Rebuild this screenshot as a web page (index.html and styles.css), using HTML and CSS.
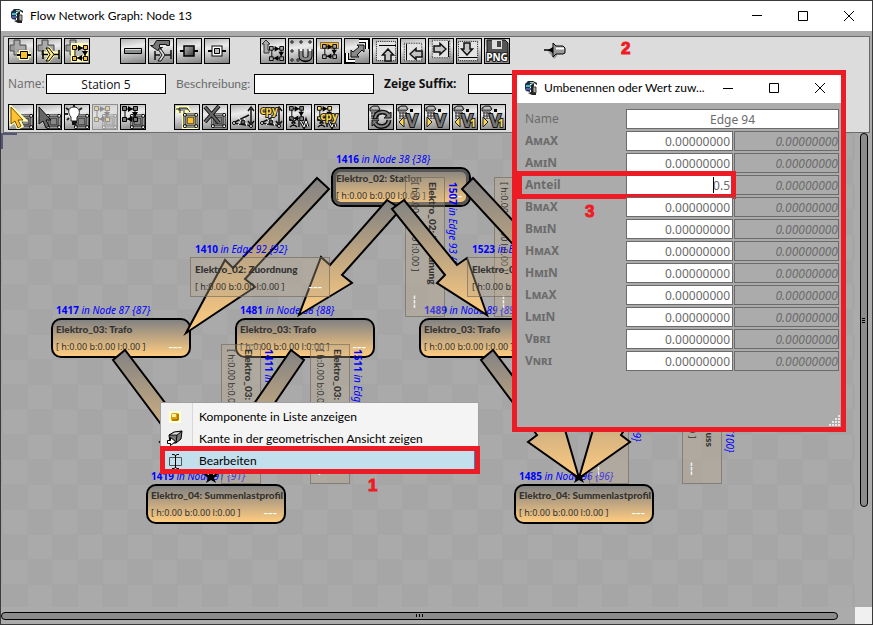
FILE: index.html
```html
<!DOCTYPE html>
<html lang="de">
<head>
<meta charset="utf-8">
<title>Flow Network Graph: Node 13</title>
<link rel="stylesheet" href="styles.css">
</head>
<body>
<svg class="sprite" aria-hidden="true">
  <defs>
    <linearGradient id="steel" x1="0" y1="0" x2="0" y2="1"><stop offset="0" stop-color="#828282"/><stop offset="1" stop-color="#ffcc80"/></linearGradient>
    <linearGradient id="metal" x1="0" y1="0" x2="1" y2="1"><stop offset="0" stop-color="#bbb"/><stop offset="1" stop-color="#333"/></linearGradient>
    <symbol id="logo" viewBox="0 0 15 16">
      <path d="M4 1h5l4 2v2l-3-2-4 1-3 2-2-2z" fill="#20242c"/><path d="M1 4l5-2v10l-4-1-1-2z" fill="#1c3550"/><path d="M2 5h5v2H2z" fill="#4bb5c8"/><path d="M2 8h5v2H2z" fill="#5a5aa0"/><path d="M7 5l3-2v3L9 8v4l3 1v2H8l-4-2 3-1z" fill="#222"/><path d="M9 7h3v6l-3-1z" fill="#aaa" stroke="#222" stroke-width=".8"/><path d="M6 2h4v1H6z" fill="#8cb"/>
    </symbol>
    <symbol id="plus" viewBox="0 0 24 24"><path d="M5 1h6v5h6v6h-6v4H5v-4H1V6h4z" fill="#999" stroke="#4c4c4c"/><path d="M6 2h4v5h6v3H8v5H6z" fill="#b5b5b5" opacity=".6"/></symbol>
    <symbol id="squares" viewBox="0 0 16 16">
      <path d="M3 3h10v10H3z" fill="none" stroke="#000"/><path d="M6 0l5 3-5 3zM10 6h6l-3 5zM10 10l-5 3 5 3z" fill="#000"/>
      <g stroke="#000"><path d="M.5.5h4v4h-4zM11.500.5h4v4h-4zM.5 11.500h4v4h-4zM11.500 11.500h4v4h-4z"/></g>
    </symbol>
    <symbol id="frame" viewBox="0 0 16 16">
      <path d="M2 2h12v12H2z" fill="none" stroke="#000" stroke-width="3"/><path d="M2 2h12v12H2z" fill="none" stroke="#fff"/>
      <path d="M4.500 4.500h7v7h-7z" stroke="#333"/>
      <g fill="#fff" stroke="#000"><circle cx="2" cy="2" r="1.600"/><circle cx="14" cy="2" r="1.600"/><circle cx="2" cy="14" r="1.600"/><circle cx="14" cy="14" r="1.600"/></g>
    </symbol>
    <symbol id="angle" viewBox="0 0 24 24">
      <path d="M2 18L18 10M2 18l19 3M20 4v14M17 6l3-4 3 4M17 16l3 4 3-4" fill="none" stroke="#111" stroke-width="1.500"/><path d="M7 12l3 4-3 4M13 13l3 8" fill="none" stroke="#fff"/><circle cx="3" cy="18" r="1.500" fill="#fff" stroke="#000"/><circle cx="12" cy="17" r="2" fill="#666" stroke="#000"/><circle cx="20" cy="21" r="1.500" fill="#fff" stroke="#000"/>
    </symbol>
    <symbol id="calc" viewBox="0 0 12 14"><path d="M1 3l3-2h5l2 3-2 2H1z" fill="#888" stroke="#222"/><path d="M3 3h6" stroke="#eee"/><path d="M2 7h8v7H2z" fill="#ddd"/><path d="M2 8h8M2 11h8M2 14h8M3 7v7M6 7v7M9 7v7" stroke="#333"/></symbol>
    <symbol id="page" viewBox="0 0 24 24"><path d="M1.500 1.500h21v21h-21z" fill="#e3e3e3" stroke="#000" stroke-dasharray="1 1"/></symbol>
    <symbol id="bold-arrow" viewBox="0 0 14 14"><path d="M7 1l5.500 6H10v6H4V7H1.500z" fill="#c4c4c4" stroke="#111" stroke-width="1.500"/></symbol>
    <symbol id="links" viewBox="0 0 24 24"><path d="M3 14l5 4-5 4M10 14l-5 4 5 4M12 15v7" fill="none" stroke="#111" stroke-width="1.500"/><path d="M14 17l3 5 2-6 2 6" stroke="#111" fill="none" stroke-width="3"/><path d="M14 17l3 5 2-6 2 6" stroke="#fff" fill="none"/></symbol>
  </defs>
</svg>

<div class="window">
  <header class="titlebar">
    <svg class="logo"><use href="#logo"/></svg>
    <h1 class="title">Flow Network Graph: Node 13</h1>
    <div class="controls">
      <button type="button" aria-label="Minimieren"><svg viewBox="0 0 12 12"><path d="M1 5.500h10"/></svg></button>
      <button type="button" aria-label="Maximieren"><svg viewBox="0 0 12 12"><path d="M1.500 1.500h9v9h-9z"/></svg></button>
      <button type="button" aria-label="Schließen"><svg viewBox="0 0 12 12"><path d="M1 1l10 10M11 1L1 11"/></svg></button>
    </div>
  </header>

  <section class="toolbar">
    <div class="tools tools-top">
      <div class="group">
        <button class="tool" type="button" aria-label="Knoten hinzufügen"><svg viewBox="0 0 24 24"><use href="#plus" width="24" height="24"/><path d="M8 16h14" stroke="#ffffb4" stroke-width="5"/><path d="M10 11h10v10H10z" fill="#ffffb4"/><path d="M8 16h14" stroke="#000" stroke-width="2"/><path d="M11.500 12.500h7v7h-7z" fill="#ffbe2e" stroke="#000"/></svg></button>
        <button class="tool" type="button" aria-label="Kante hinzufügen"><svg viewBox="0 0 24 24"><use href="#plus" width="24" height="24"/><path d="M6 15h17M10 9l6 6-6 7" fill="none" stroke="#ffffb4" stroke-width="5"/><path d="M6 11v9M22 11v9M6 15.500h5M16 15.500h6" stroke="#000" stroke-width="1.500"/><path d="M9 9h3l5 6.500-5 6.500H9l4-6.500z" fill="#ffe68a" stroke="#000"/></svg></button>
        <button class="tool" type="button" aria-label="Netz hinzufügen"><svg viewBox="0 0 24 24"><use href="#plus" width="24" height="24"/><path d="M6 4h17v19H6z" fill="#ffffb4"/><path d="M11 10h7v7h-7z" fill="#bbb"/><use href="#squares" x="7" y="6" width="16" height="16" fill="#ffbe2e"/></svg></button>
      </div>
      <div class="group">
        <button class="tool" type="button" aria-label="Balken"><svg viewBox="0 0 24 24"><path d="M3.500 9.500h17v5h-17z" fill="#8b8f8b" stroke="#000"/><path d="M4 10.500h16" stroke="#ddd"/></svg></button>
        <button class="tool" type="button" aria-label="Kante umleiten"><svg viewBox="0 0 24 24"><path d="M7.500 1.500h13v5h-3v-1h-7v3h3l-5 3-7-5h3z" fill="#777" stroke="#111"/><path d="M6 12v9M22 11v9M6 16h5M16 16h6" stroke="#111" stroke-width="1.500"/><path d="M9 10h3l4 6-4 6H9l4-6z" fill="#ddd" stroke="#111"/></svg></button>
        <button class="tool" type="button" aria-label="Knoten"><svg viewBox="0 0 24 24"><path d="M3 12h18" stroke="#000" stroke-width="2"/><path d="M7 7h10v10H7z" fill="url(#metal)" stroke="#000" stroke-width="1.500"/></svg></button>
        <button class="tool" type="button" aria-label="Innerer Knoten"><svg viewBox="0 0 24 24"><path d="M3 12h18" stroke="#000" stroke-width="2"/><path d="M8.500 8.500h7v7h-7z" fill="#ccc" stroke="#000" stroke-width="4"/><path d="M8.500 8.500h7v7h-7z" fill="none" stroke="#fff" stroke-width="2"/><path d="M9.500 9.500h5v5h-5z" fill="#bbb" stroke="#000"/></svg></button>
      </div>
      <div class="group">
        <button class="tool" type="button" aria-label="Ebene hoch"><svg viewBox="0 0 24 24"><path d="M5 1L1 5h2v9h5v-3H7V5h2z" fill="#aaa" stroke="#333"/><use href="#squares" x="8" y="7" width="15" height="15" fill="#aaa"/></svg></button>
        <button class="tool" type="button" aria-label="Einrasten"><svg viewBox="0 0 24 24"><g fill="#fff" stroke="#111"><path d="M2 2h2v2H2zM11 2h2v2h-2zM20 2h2v2h-2zM2 11h2v2H2zM2 20h2v2H2zM8 20h2v2H8z"/></g><path d="M12 10v7c0 5 9 5 9 0v-7" fill="none" stroke="#000" stroke-width="5"/><path d="M12 12v5c0 4 9 4 9 0v-5" fill="none" stroke="#888" stroke-width="3"/><path d="M10.500 11h3M19.500 11h3" stroke="#fff" stroke-width="2"/></svg></button>
        <button class="tool" type="button" aria-label="Ausrichten"><svg viewBox="0 0 24 24"><path d="M3.500 3.500h18v6h-18z" fill="#ffbe2e" stroke="#111" stroke-dasharray="1 1"/><use href="#squares" x="5" y="5" width="15" height="15" fill="#aaa"/></svg></button>
        <button class="tool" type="button" aria-label="Alles zeigen"><svg viewBox="0 0 24 24"><path d="M14 2h8v8M2 14v8h8" fill="none" stroke="#000" stroke-width="4"/><path d="M14 2h8v8M2 14v8h8" fill="none" stroke="#fff" stroke-width="2"/><path d="M12 6h7v7l-2-2-5 5 2 2H6v-7l2 2 6-5z" fill="#888" stroke="#111"/></svg></button>
        <button class="tool" type="button" aria-label="Oben anordnen"><svg viewBox="0 0 24 24"><g transform="translate(2)"><use href="#page" width="22" height="24"/><path d="M4 6.500h17" stroke="#000"/><use href="#bold-arrow" x="6" y="9" width="14" height="14"/></g></svg></button>
        <button class="tool" type="button" aria-label="Links anordnen"><svg viewBox="0 0 24 24"><use href="#page" y="3" width="24" height="20"/><path d="M5.500 5v16" stroke="#000"/><use href="#bold-arrow" x="8" y="8" width="14" height="14" transform="rotate(-90 15 15)"/></svg></button>
        <button class="tool" type="button" aria-label="Rechts anordnen"><svg viewBox="0 0 24 24"><use href="#page" width="24" height="20"/><path d="M19.500 2v16" stroke="#000"/><use href="#bold-arrow" x="4" y="3" width="14" height="14" transform="rotate(90 11 10)"/></svg></button>
        <button class="tool" type="button" aria-label="Unten anordnen"><svg viewBox="0 0 24 24"><use href="#page" width="22" height="24"/><path d="M2 18.500h18" stroke="#000"/><use href="#bold-arrow" x="3" y="3" width="14" height="14" transform="rotate(180 10 10)"/></svg></button>
        <button class="tool" type="button" aria-label="Als PNG speichern"><svg viewBox="0 0 24 24"><path d="M2 1h18l3 3v17H2z" fill="#555" stroke="#111"/><path d="M7 1h10v9H7z" fill="#ddd"/><path d="M12 2h4v6h-4z" fill="#444"/><text x="12" y="22" class="glyph png">PNG</text></svg></button>
      </div>
      <svg class="pin" viewBox="0 0 22 20" aria-hidden="true"><path d="M3 9l7 9 3-3V9z" fill="#999"/><path d="M0 9h9" stroke="#000" stroke-width="1.500"/><path d="M9 2l3 3h7l2 2v5l-2 1h-7l-3 3z" fill="#999" stroke="#000"/><path d="M12 7.500h8" stroke="#fff" stroke-width="2"/><path d="M4 9l5-3v6z"/></svg>
    </div>
    <div class="fields">
      <label class="name-label" for="name">Name:</label><input id="name" type="text" value="Station 5">
      <label class="desc-label" for="desc">Beschreibung:</label><input id="desc" type="text">
      <label class="suffix-label" for="suffix">Zeige Suffix:</label><input id="suffix" type="text">
    </div>
    <div class="tools tools-bottom">
      <div class="group">
        <button class="tool" type="button" aria-label="Auswählen"><svg viewBox="0 0 24 24"><use href="#frame" x="9" y="9" width="15" height="15" fill="#888"/><path d="M2 2v17l4-3 3 7 4-2-3-6 6 0z" fill="#ffc233" stroke="#ffffb4" stroke-width="3"/><path d="M2 2v17l4-3 3 7 3-2-3-6 5 0z" fill="#ffc233" stroke="#7a4d00"/></svg></button>
        <button class="tool" type="button" aria-label="Abwählen"><svg viewBox="0 0 24 24"><use href="#frame" x="9" y="9" width="15" height="15" fill="#888"/><path d="M2 2v17l4-3 3 7 3-2-3-6 5 0z" fill="#666" stroke="#111"/></svg></button>
        <button class="tool" type="button" aria-label="Hervorheben"><svg viewBox="0 0 24 24"><use href="#frame" x="9" y="9" width="15" height="15" fill="#888"/><path d="M1 3l3 2M0 9h3M17 3l-3 2M2 15l2-2M9 0v2" stroke="#222" stroke-width="2"/><path d="M9 2c-7 0-6 7-3 10v4h6v-4c4-3 3-10-3-10z" fill="#fff" stroke="#222"/><path d="M7 17h5M7 19h4" stroke="#111" stroke-width="2"/></svg></button>
        <button class="tool" type="button" disabled aria-label="Netz auflösen"><svg viewBox="0 0 24 24"><use href="#frame" x="9" y="9" width="15" height="15" fill="#888"/><use href="#squares" x="1" y="1" width="16" height="16" fill="#ffc233"/></svg></button>
        <button class="tool" type="button" aria-label="Netz auswählen"><svg viewBox="0 0 24 24"><use href="#frame" x="9" y="9" width="15" height="15" fill="#888"/><use href="#squares" x="1" y="1" width="16" height="16" fill="#777"/></svg></button>
      </div>
      <div class="group">
        <button class="tool" type="button" aria-label="Bearbeiten"><svg viewBox="0 0 24 24"><path d="M2 2h11l2 4h-4v3H7V7H2z" fill="#999" stroke="#ffffb4" stroke-width="2"/><path d="M1 4h4v4M4 3h8l3 4" fill="none" stroke="#222"/><path d="M7 8h16v16H7z" fill="#ffffb4"/><use href="#frame" x="8" y="8" width="15" height="15" fill="#ffbe2e"/></svg></button>
        <button class="tool" type="button" aria-label="Löschen"><svg viewBox="0 0 24 24"><use href="#frame" x="8" y="8" width="15" height="15" fill="#888"/><path d="M2 2l14 16M16 1L2 17" stroke="#111" stroke-width="4"/><path d="M2 2l14 16M16 1L2 17" stroke="#666" stroke-width="2"/></svg></button>
        <button class="tool" type="button" aria-label="Winkel"><svg viewBox="0 0 24 24"><use href="#angle" width="24" height="24"/></svg></button>
        <button class="tool" type="button" aria-label="Winkel kopieren"><svg viewBox="0 0 24 24"><use href="#angle" width="24" height="24"/><text x="10" y="9" class="glyph copy">cpy</text></svg></button>
        <button class="tool" type="button" aria-label="Verbindungen"><svg viewBox="0 0 24 24"><use href="#squares" x="2" y="1" width="15" height="15" fill="#888"/><use href="#links" width="24" height="24"/></svg></button>
        <button class="tool" type="button" aria-label="Verbindungen kopieren"><svg viewBox="0 0 24 24"><use href="#squares" x="2" y="1" width="15" height="15" fill="#ffe06a"/><use href="#links" width="24" height="24"/><text x="14" y="15" class="glyph copy">cpy</text></svg></button>
      </div>
      <div class="group">
        <button class="tool" type="button" aria-label="Neu berechnen"><svg viewBox="0 0 24 24"><use href="#calc" width="12" height="14"/><path d="M6 14c0-8 11-9 14-3M20 15c-1 8-11 8-14 3" fill="none" stroke="#111" stroke-width="5"/><path d="M22 7v6h-7zM3 21v-6h7z" fill="#777" stroke="#111"/><path d="M6 13c1-7 11-8 14-2M20 15c-1 8-11 8-14 3" fill="none" stroke="#888" stroke-width="2"/></svg></button>
        <button class="tool" type="button" aria-label="Volumenstrom zurück"><svg viewBox="0 0 24 24"><use href="#calc" width="12" height="14"/><text x="15" y="22" class="glyph flow">V</text><path d="M13 4h3v3h-3z"/><path d="M7 12v10l-5-5z" fill="#ffd84a" stroke="#222"/></svg></button>
        <button class="tool" type="button" aria-label="Volumenstrom vor"><svg viewBox="0 0 24 24"><use href="#calc" width="12" height="14"/><text x="15" y="22" class="glyph flow">V</text><path d="M13 4h3v3h-3z"/><path d="M2 12v10l5-5z" fill="#ffd84a" stroke="#222"/></svg></button>
        <button class="tool" type="button" aria-label="Volumenstrom 1 zurück"><svg viewBox="0 0 24 24"><use href="#calc" width="12" height="14"/><text x="14" y="22" class="glyph flow">V</text><path d="M13 4h3v3h-3z"/><path d="M7 12v10l-5-5z" fill="#ffd84a" stroke="#222"/><text x="20" y="22" class="glyph one">1</text></svg></button>
        <button class="tool" type="button" aria-label="Volumenstrom 1 vor"><svg viewBox="0 0 24 24"><use href="#calc" width="12" height="14"/><text x="14" y="22" class="glyph flow">V</text><path d="M13 4h3v3h-3z"/><path d="M2 12v10l5-5z" fill="#ffd84a" stroke="#222"/><text x="20" y="22" class="glyph one">1</text></svg></button>
      </div>
    </div>
  </section>

  <main class="viewport">
    <div class="stage">
      <div class="node station"><p class="tag"><b>1416</b> <i>in Node 38 {38}</i></p><div class="card selected"><strong>Elektro_02: Station</strong><span class="dims">[ h:0.00 b:0.00 l:0.00 ]<em>---</em></span></div></div>
      <div class="node trafo-a"><p class="tag"><b>1417</b> <i>in Node 87 {87}</i></p><div class="card"><strong>Elektro_03: Trafo</strong><span class="dims">[ h:0.00 b:0.00 l:0.00 ]<em>---</em></span></div></div>
      <div class="node trafo-b"><p class="tag"><b>1481</b> <i>in Node 88 {88}</i></p><div class="card"><strong>Elektro_03: Trafo</strong><span class="dims">[ h:0.00 b:0.00 l:0.00 ]<em>---</em></span></div></div>
      <div class="node trafo-c"><p class="tag"><b>1489</b> <i>in Node 89 {89}</i></p><div class="card"><strong>Elektro_03: Trafo</strong><span class="dims">[ h:0.00 b:0.00 l:0.00 ]<em>---</em></span></div></div>
      <div class="node load-a"><p class="tag"><b>1419</b> <i>in Node 91 {91}</i></p><div class="card"><strong>Elektro_04: Summenlastprofil</strong><span class="dims">[ h:0.00 b:0.00 l:0.00 ]<em>---</em></span></div></div>
      <div class="node load-b"><p class="tag"><b>1485</b> <i>in Node 96 {96}</i></p><div class="card"><strong>Elektro_04: Summenlastprofil</strong><span class="dims">[ h:0.00 b:0.00 l:0.00 ]<em>---</em></span></div></div>

      <div class="node edge turned edge-93"><p class="tag"><b>1507</b> <i>in Edge 93 {93}</i></p><div class="card"><strong>Elektro_02: Zuordnung</strong><span class="dims">[ h:0.00 b:0.00 l:0.00 ]<em>---</em></span></div></div>
      <div class="node edge turned edge-94"><p class="tag"><b>1519</b> <i>in Edge 94 {94}</i></p><div class="card"><strong>Elektro_02: Zuordnung</strong><span class="dims">[ h:0.00 b:0.00 l:0.00 ]<em>---</em></span></div></div>
      <div class="node edge turned edge-97"><p class="tag"><b>1411</b> <i>in Edge 97 {97}</i></p><div class="card"><strong>Elektro_03: Anschluss</strong><span class="dims">[ h:0.00 b:0.00 l:0.00 ]<em>---</em></span></div></div>
      <div class="node edge turned edge-98"><p class="tag"><b>1511</b> <i>in Edge 98 {98}</i></p><div class="card"><strong>Elektro_03: Anschluss</strong><span class="dims">[ h:0.00 b:0.00 l:0.00 ]<em>---</em></span></div></div>
      <div class="node edge turned edge-99"><p class="tag"><b>1515</b> <i>in Edge 99 {99}</i></p><div class="card"><strong>Elektro_03: Anschluss</strong><span class="dims">[ h:0.00 b:0.00 l:0.00 ]<em>---</em></span></div></div>
      <div class="node edge turned edge-100"><p class="tag"><b>1527</b> <i>in Edge 100 {100}</i></p><div class="card"><strong>Elektro_03: Anschluss</strong><span class="dims">[ h:0.00 b:0.00 l:0.00 ]<em>---</em></span></div></div>

      <svg class="arrows" aria-hidden="true"><g transform="translate(-1 -133)">
        <path d="M317 178L329 189 245 279 255 287 186 333 225 260 233 268z"/>
        <path d="M387 200L401 209 342 275 352 283 299 315 321 257 330 265z"/>
        <path d="M473 178L462 189 545 279 535 287 604 333 565 260 557 268z"/>
        <path d="M404 200L392 209 445 275 437 283 487 315 467 258 457 265z"/>
        <path d="M125 350L113 360 169 435 160 442 211 478 193 416 182 425z"/>
        <path d="M291 350L304 360 253 435 262 442 211 478 229 416 240 424z"/>
        <path d="M493 350L481 360 537 435 528 442 579 478 561 416 550 425z"/>
        <path d="M659 350L672 360 621 435 630 442 579 478 597 416 608 424z"/>
        <path class="joint" d="M205 475l12 0-3 3 2 5-5-3-5 3 2-5z"/>
        <path class="joint" d="M573 475l12 0-3 3 2 5-5-3-5 3 2-5z"/>
      </g></svg>

      <div class="node edge edge-92"><p class="tag"><b>1410</b> <i>in Edge 92 {92}</i></p><div class="card"><strong>Elektro_02: Zuordnung</strong><span class="dims">[ h:0.00 b:0.00 l:0.00 ]<em>---</em></span></div></div>
      <div class="node edge edge-95"><p class="tag"><b>1523</b> <i>in Edge 95 {95}</i></p><div class="card"><strong>Elektro_02: Zuordnung</strong><span class="dims">[ h:0.00 b:0.00 l:0.00 ]<em>---</em></span></div></div>
    </div>
    <div class="scroll vertical"><span class="thumb"></span></div>
    <div class="scroll horizontal"><span class="thumb"></span></div>
    <div class="corner"></div>
  </main>
</div>

<nav class="menu">
  <button type="button"><svg viewBox="0 0 18 18"><path d="M3 3h12v12H3z" fill="#ffffd8"/><rect x="5" y="5" width="8" height="8" rx="2" fill="#e0a000"/><path d="M6 6h4v3H6z" fill="#fff0a0"/><path d="M12 6v6H6" fill="none" stroke="#8a5a00"/></svg>Komponente in Liste anzeigen</button>
  <button type="button"><svg viewBox="0 0 18 18"><path d="M3 5l5-3 8-1-1 8-5 4H4z" fill="#777" stroke="#000"/><path d="M3 5h8l5-4M11 5l-1 8" fill="none" stroke="#000"/><path d="M5 4.500l4-2 5-.5-3 2.500z" fill="#ddd"/><path d="M1.500 10.500h3v-3l5 4-5 4v-2h-3z" fill="#fff" stroke="#000"/></svg>Kante in der geometrischen Ansicht zeigen</button>
  <button class="active" type="button"><svg viewBox="0 0 18 18"><path d="M3.500 5.500h12v8h-12z" fill="none" stroke="#555"/><path d="M6 2.500h2l1.500 1 1.500-1h2M9.500 3v13M6 16.500h2l1.500-1 1.500 1h2" fill="none" stroke="#000"/></svg>Bearbeiten</button>
</nav>

<section class="dialog">
  <header class="titlebar">
    <svg class="logo"><use href="#logo"/></svg>
    <h2 class="title">Umbenennen oder Wert zuw...</h2>
    <div class="controls">
      <button type="button" aria-label="Minimieren"><svg viewBox="0 0 12 12"><path d="M1 6.500h10"/></svg></button>
      <button type="button" aria-label="Maximieren"><svg viewBox="0 0 12 12"><path d="M1.500 1.500h9v9h-9z"/></svg></button>
      <button type="button" aria-label="Schließen"><svg viewBox="0 0 12 12"><path d="M1 1l10 10M11 1L1 11"/></svg></button>
    </div>
  </header>
  <form class="form">
    <div class="row row-name"><label for="v-name">Name</label><input id="v-name" value="Edge 94"></div>
    <div class="row"><label for="v1">AmaX</label><input id="v1" value="0.00000000"><input class="old" aria-label="AmaX bisher" value="0.00000000" readonly></div>
    <div class="row"><label for="v2">AmiN</label><input id="v2" value="0.00000000"><input class="old" aria-label="AmiN bisher" value="0.00000000" readonly></div>
    <div class="row row-current"><label for="v3">Anteil</label><input id="v3" value="0.5"><span class="caret"></span><input class="old" aria-label="Anteil bisher" value="0.00000000" readonly></div>
    <div class="row"><label for="v4">BmaX</label><input id="v4" value="0.00000000"><input class="old" aria-label="BmaX bisher" value="0.00000000" readonly></div>
    <div class="row"><label for="v5">BmiN</label><input id="v5" value="0.00000000"><input class="old" aria-label="BmiN bisher" value="0.00000000" readonly></div>
    <div class="row"><label for="v6">HmaX</label><input id="v6" value="0.00000000"><input class="old" aria-label="HmaX bisher" value="0.00000000" readonly></div>
    <div class="row"><label for="v7">HmiN</label><input id="v7" value="0.00000000"><input class="old" aria-label="HmiN bisher" value="0.00000000" readonly></div>
    <div class="row"><label for="v8">LmaX</label><input id="v8" value="0.00000000"><input class="old" aria-label="LmaX bisher" value="0.00000000" readonly></div>
    <div class="row"><label for="v9">LmiN</label><input id="v9" value="0.00000000"><input class="old" aria-label="LmiN bisher" value="0.00000000" readonly></div>
    <div class="row"><label for="v10">Vbri</label><input id="v10" value="0.00000000"><input class="old" aria-label="Vbri bisher" value="0.00000000" readonly></div>
    <div class="row"><label for="v11">Vnri</label><input id="v11" value="0.00000000"><input class="old" aria-label="Vnri bisher" value="0.00000000" readonly></div>
  </form>
  <svg class="resize" viewBox="0 0 12 12" aria-hidden="true"><path d="M9 1h2v2H9zM6 4h2v2H6zM9 4h2v2H9zM3 7h2v2H3zM6 7h2v2H6zM9 7h2v2H9zM0 10h2v2H0zM3 10h2v2H3zM6 10h2v2H6zM9 10h2v2H9z" fill="#e8e8e8"/></svg>
</section>

<span class="step step-1">1</span>
<span class="step step-2">2</span>
<span class="step step-3">3</span>
</body>
</html>
```
FILE: styles.css
```css
* { box-sizing: border-box; }

body {
  margin: 0;
  position: relative;
  overflow: hidden;
  font: 12px/16px "Open Sans", "Noto Sans", sans-serif;
  color: #000;
}

button, input { font: inherit; color: inherit; margin: 0; }
h1, h2, p { margin: 0; font-size: inherit; font-weight: normal; }
.sprite { position: absolute; width: 0; height: 0; }

.window {
  display: flex;
  flex-direction: column;
  min-height: 100vh;
  border: 1px solid #3a3a3a;
  background: #ababab;
}

/* Title bars */
.titlebar { display: flex; align-items: center; height: 30px; padding-left: 9px; background: #fff; }
.logo { width: 15px; height: 16px; margin-right: 5px; flex: none; }
.title { flex: 1; white-space: nowrap; font-family: Lato, "Open Sans", sans-serif; }
.controls { display: flex; height: 100%; }
.controls button { display: grid; place-items: center; width: 46px; padding: 0; border: 0; background: none; }
.controls svg { width: 12px; height: 12px; fill: none; stroke: #000; stroke-width: 1; }

/* Toolbar */
.toolbar {
  display: flex;
  flex-direction: column;
  gap: 10px;
  margin: 5px 2px 0;
  padding: 1px 4px 2px;
  border: 1px solid #6b6b6b;
  background: #dcdcdc;
}
.tools { display: flex; align-items: center; }
.tools-top { gap: 30px; }
.tools-bottom { gap: 28px; }
.group { display: flex; gap: 2px; }
.tool {
  width: 26px;
  height: 26px;
  padding: 0;
  border: 1px solid #000;
  background: linear-gradient(170deg, #b4b4b4, #ececec 35%, #808080);
}
.tool svg { display: block; width: 24px; height: 24px; }
.tool:disabled { opacity: 0.35; }
.pin { width: 22px; height: 20px; margin-left: 4px; }
.glyph { font-weight: bold; text-anchor: middle; paint-order: stroke; stroke: #222; }
.png { font-size: 10px; fill: #fff; stroke-width: 2px; }
.copy { font-size: 10px; fill: #ffd84a; stroke-width: 2px; }
.flow { font-size: 18px; fill: #777; stroke: #111; stroke-width: 2px; }
.one { font-size: 11px; fill: #ffd84a; stroke-width: 2px; }

.fields { display: flex; align-items: center; height: 20px; color: #6b6b6b; }
.fields input {
  width: 120px;
  height: 20px;
  margin-right: 10px;
  padding: 0 4px;
  border: 1px solid #000;
  background: #fff;
  color: #111;
  text-align: center;
}
.fields label { flex: none; }
.name-label { width: 38px; }
.desc-label { width: 78px; font-family: Lato, "Open Sans", sans-serif; }
.suffix-label { width: 84px; color: #111; font-weight: bold; }

/* Canvas and scroll bars */
.viewport { flex: 1; display: grid; grid-template: minmax(0, 1fr) 17px / minmax(0, 1fr) 17px; }
.stage {
  position: relative;
  overflow: hidden;
  background:
    linear-gradient(#55557a, #55557a) 0 0 / 16px 2px no-repeat,
    linear-gradient(#55557a, #55557a) 0 0 / 2px 16px no-repeat,
    repeating-linear-gradient(90deg, #a6a6a6 0 1px, transparent 1px 25px) 1px 1px,
    repeating-linear-gradient(#a6a6a6 0 1px, transparent 1px 25px) 1px 1px,
    repeating-conic-gradient(#aaa 0 25%, #a6a6a6 0 50%) 1px 1px / 50px 50px;
}
.scroll { display: flex; }
.vertical { grid-area: 1 / 2; justify-content: center; }
.horizontal { grid-area: 2 / 1; align-items: center; }
.corner { grid-area: 2 / 2; background: #f0f0f0; }
.thumb {
  display: grid;
  place-items: center;
  border: 1px solid #000;
  border-radius: 4px;
  background: #8c8c8c;
}
.thumb::after { content: ""; width: 5px; height: 5px; }
.vertical .thumb { width: 8px; height: 79%; }
.horizontal .thumb { width: 98%; height: 8px; }
.vertical .thumb::after { width: 3px; background: repeating-linear-gradient(#000 0 1px, transparent 1px 2px); }
.horizontal .thumb::after { width: 7px; height: 3px; background: repeating-linear-gradient(90deg, #000 0 1px, transparent 1px 3px); }

/* Graph nodes */
.node { position: absolute; font: 10px/16px "Noto Sans", "Open Sans", sans-serif; white-space: nowrap; }
.tag { block-size: 16px; padding-inline-start: 5px; color: #00f; }
.card {
  inline-size: 140px;
  block-size: 40px;
  padding-inline-start: 3px;
  border: 2px solid #000;
  border-radius: 10px;
  overflow: hidden;
  background: linear-gradient(#828282, #ffcc80);
  color: #333;
}
.card strong { display: block; line-height: 18px; font-family: Lato, "Noto Sans", sans-serif; font-weight: 900; }
.dims { display: flex; justify-content: space-between; align-items: center; padding-inline-end: 7px; font-size: 9px; line-height: 18px; }
.dims em { color: #fff; font-style: normal; font-size: 14px; }
.selected { box-shadow: inset 0 0 0 3px #555; }
.edge .card {
  border: 1px solid rgba(90, 85, 75, 0.5);
  border-radius: 0;
  padding-inline-start: 4px;
  padding-block-start: 2px;
  background: rgba(190, 170, 140, 0.35);
}
.turned { writing-mode: vertical-rl; }
.arrows { position: absolute; inset: 0; width: 100%; height: 100%; }
.arrows path { fill: url(#steel); stroke: #000; stroke-width: 2; stroke-miterlimit: 8; }
.arrows .joint { fill: #000; stroke: none; }

.station { left: 330px; top: 18px; }
.trafo-a { left: 50px; top: 169px; }
.trafo-b { left: 234px; top: 169px; }
.trafo-c { left: 418px; top: 169px; }
.load-a { left: 145px; top: 335px; }
.load-b { left: 513px; top: 335px; }
.edge-92 { left: 189px; top: 108px; }
.edge-95 { left: 466px; top: 108px; }
.edge-93 { left: 404px; top: 44px; }
.edge-94 { left: 493px; top: 44px; }
.edge-97 { left: 220px; top: 211px; }
.edge-98 { left: 309px; top: 211px; }
.edge-99 { left: 588px; top: 211px; }
.edge-100 { left: 681px; top: 211px; }

/* Context menu */
.menu {
  position: absolute;
  left: 160px;
  top: 402px;
  width: 319px;
  padding-top: 3px;
  background: linear-gradient(90deg, #f0f0f0 31px, #d8d8d8 31px 32px, #f4f4f4 32px);
  border: 1px solid #a0a0a0;
  border-width: 1px 1px 0;
  font-family: Lato, "Open Sans", sans-serif;
}
.menu button {
  display: flex;
  align-items: center;
  gap: 15px;
  width: 100%;
  height: 22px;
  padding: 0 5px;
  border: 0;
  background: none;
  text-align: left;
  white-space: nowrap;
}
.menu svg { width: 18px; height: 18px; flex: none; }
.menu .active { position: relative; background: #c2dfee; }
.menu .active::before {
  content: "";
  position: absolute;
  inset: -4px -2px -2px -1px;
  border: 5px solid #ed1c24;
  box-shadow: inset -1px 0 #2a8ac0;
}

/* Value dialog */
.dialog {
  position: absolute;
  left: 512px;
  top: 70px;
  width: 334px;
  border: 5px solid #ed1c24;
  background: #ababab;
  color: #6b6b6b;
}
.dialog .titlebar { height: 28px; padding: 0 8px 3px 7px; color: #000; }
.form { padding: 5px 2px 55px 8px; font-family: "Noto Sans", "Open Sans", sans-serif; }
.row {
  position: relative;
  display: grid;
  grid-template-columns: 100px minmax(0, 107px) minmax(0, 105px);
  column-gap: 1px;
  align-items: center;
  height: 22px;
}
.row label { font-weight: bold; font-variant: small-caps; }
.row input {
  width: 100%;
  height: 20px;
  padding: 0 2px;
  border: 1px solid #6b6b6b;
  background: #fff;
  text-align: right;
}
.row .old { background: transparent; padding: 0; font-style: italic; }
.row-name label { font-weight: normal; font-variant: normal; }
.row-name input { grid-column: 2 / 4; text-align: center; }
.row .caret { position: absolute; right: 125px; top: 3px; width: 1px; height: 16px; background: #000; }
.row-current label { font-variant: normal; }
.row-current::before {
  content: "";
  position: absolute;
  inset: -3px 103px -3px -8px;
  border: 5px solid #ed1c24;
}
.resize { position: absolute; right: 0; bottom: 1px; width: 12px; height: 12px; }

/* Step numbers */
.step { position: absolute; color: #ed1c24; font: bold 17px/20px "Liberation Sans", sans-serif; -webkit-text-stroke: 1px #ed1c24; }
.step-1 { left: 368px; top: 476px; }
.step-2 { left: 621px; top: 39px; }
.step-3 { left: 585px; top: 202px; }
```
